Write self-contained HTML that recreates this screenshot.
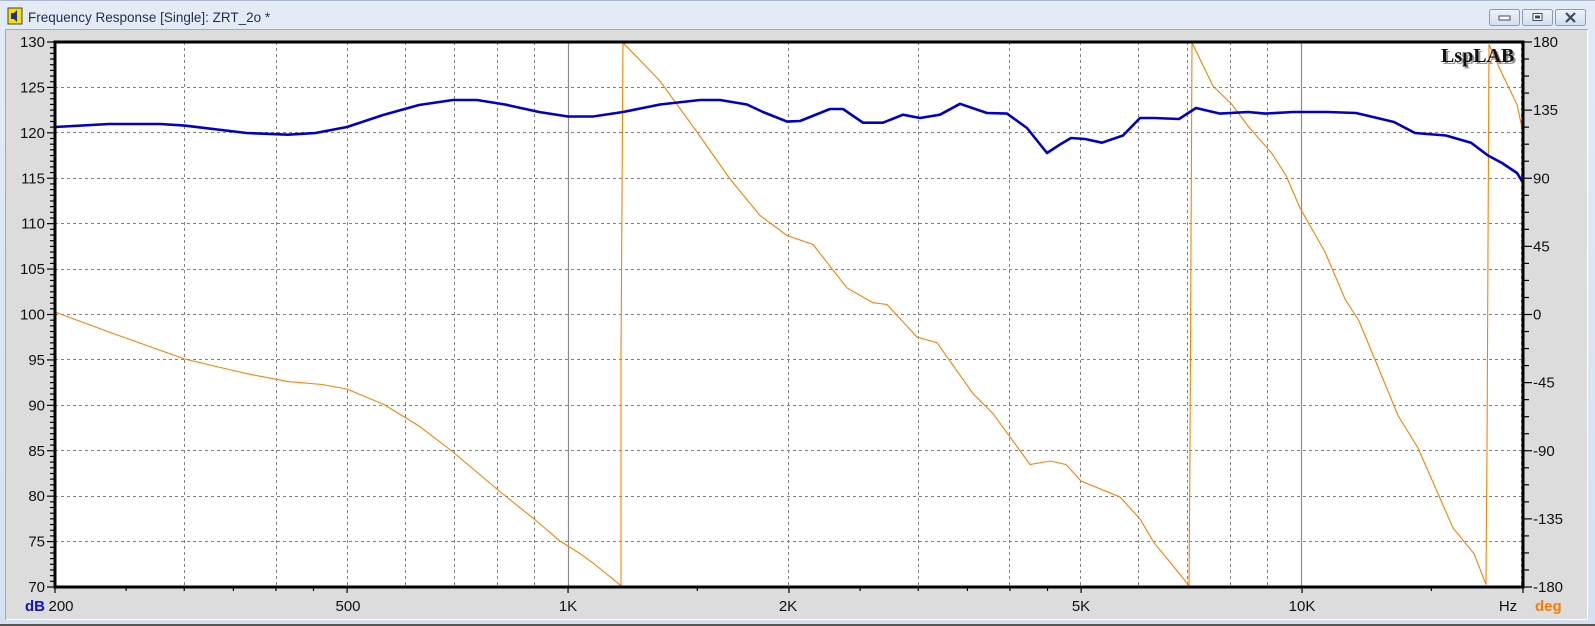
<!DOCTYPE html>
<html><head><meta charset="utf-8"><style>
html,body{margin:0;padding:0;width:1595px;height:626px;overflow:hidden;background:#d9e4f1;font-family:"Liberation Sans",sans-serif}
</style></head><body>
<svg width="1595" height="626" viewBox="0 0 1595 626" xmlns="http://www.w3.org/2000/svg" style="position:absolute;left:0;top:0">
<defs>
<linearGradient id="tb" x1="0" y1="0" x2="0" y2="1"><stop offset="0" stop-color="#e3ebf6"/><stop offset="1" stop-color="#d5e1f0"/></linearGradient>
<linearGradient id="bt" x1="0" y1="0" x2="0" y2="1"><stop offset="0" stop-color="#eef3fa"/><stop offset="1" stop-color="#d3deec"/></linearGradient>
</defs>
<rect x="0" y="0" width="1595" height="626" fill="url(#tb)"/>
<rect x="0" y="0" width="1595" height="1" fill="#a9b8cc"/>
<rect x="0" y="624" width="1595" height="2" fill="#555"/>
<rect x="8" y="8" width="14" height="16" fill="#f6e200" stroke="#444" stroke-width="1"/>
<path d="M11 13h3l3-3v12l-3-3h-3z" fill="#2a2aa0"/>
<text x="28" y="22" font-size="13.5" fill="#1e2f4a">Frequency Response [Single]: ZRT_2o *</text>
<g stroke="#8a9bb3" fill="url(#bt)">
<rect x="1489.5" y="9.5" width="30" height="16" rx="2"/>
<rect x="1522.5" y="9.5" width="30" height="16" rx="2"/>
<rect x="1555.5" y="9.5" width="30" height="16" rx="2"/>
</g>
<rect x="1499" y="16" width="11" height="4" fill="#fff" stroke="#3e4a5c"/>
<rect x="1533" y="13.5" width="9" height="7" fill="#fff" stroke="#3e4a5c"/>
<rect x="1535" y="15.5" width="5" height="3" fill="#3e4a5c"/>
<path d="M1566 13l9 9M1575 13l-9 9" stroke="#3e4a5c" stroke-width="2.2"/>
<rect x="5" y="29" width="1583" height="591" fill="#fff"/>
<rect x="6" y="30" width="1581" height="589" fill="#dcdcdc"/>
<rect x="5" y="29" width="1583" height="1" fill="#aaa"/>
<rect x="5" y="29" width="1" height="591" fill="#aaa"/>
<rect x="55" y="42" width="1468" height="545" fill="#fff"/>
<g stroke="#808080" stroke-width="1" stroke-dasharray="3,3" fill="none">
<path d="M55 87.5H1523M55 132.5H1523M55 178.5H1523M55 223.5H1523M55 269.5H1523M55 314.5H1523M55 359.5H1523M55 405.5H1523M55 450.5H1523M55 496.5H1523M55 541.5H1523"/>
<path d="M184.5 42V587M276.5 42V587M347.5 42V587M405.5 42V587M454.5 42V587M497.5 42V587M534.5 42V587M788.5 42V587M918.5 42V587M1009.5 42V587M1080.5 42V587M1138.5 42V587M1187.5 42V587M1230.5 42V587M1267.5 42V587M1521.5 42V587"/>
</g>
<path d="M568.5 42V587M1301.5 42V587" stroke="#8c8c8c" stroke-width="1.2"/>
<polyline fill="none" stroke="#ff8000" stroke-width="1.1" points="55,312 109,332 184.6,359 246.6,373.6 288,381.6 322,384.5 347,389 384,404.5 419,426 453,452 498,490 539,523 560,541 580,553.6 593,563 621,585.6 621,355 623,42.7 660,81 697,132 730,179 760,215.5 787,235.5 813,244.5 847,288 873,302.7 887,304.5 917,337 937,342.7 973,393.6 993,413.6 1030,464.5 1050,461 1066,464.5 1081,481 1120,497 1140,519 1154,542.7 1172,564.5 1189,585.6 1190,450 1192,42.7 1213,86 1232,104.5 1248,126 1272,153.6 1286,175.5 1300,208 1325,252 1345,299 1359,321 1377,364.5 1398,415.5 1418,448 1453,528 1474,553.6 1486,584.5 1487,450 1489,44.5 1502,73.6 1517,104.5 1522,128"/>
<polyline fill="none" stroke="#0000c8" stroke-width="2.6" stroke-linejoin="round" points="55,127 109,124 160.5,124 184.6,125.6 246.6,133 288,134.7 315.5,133 347,127 384,114.7 419,105 453,100 477,100 505,104.5 539,112 568,116.5 593,116.5 623,112 660,104.5 700,100 720,100 747,104.5 763,112 787,121.6 800,121 830,109 843,109 863,122.7 883,122.7 903,114.7 920,118 940,114.7 960,103.8 987,113 1007,113.6 1027,128 1047,153 1060,144.5 1071,138 1085,139 1102,142.7 1123,135.5 1140,118 1154,118 1179,119 1196,108 1220,113.6 1248,112 1265,113.6 1293,112 1328,112 1356,113 1373,117 1394,122 1415,133 1446,135.5 1471,142.7 1488,155.5 1502,163 1517,173 1523,182.7"/>
<rect x="55" y="42" width="1468" height="545" fill="none" stroke="#000" stroke-width="3"/>
<g stroke="#000" stroke-width="1.2" id="lt"></g>
<text x="1443" y="64" font-family="'Liberation Serif',serif" font-weight="bold" font-size="20" fill="#999">LspLAB</text>
<text x="1441" y="62" font-family="'Liberation Serif',serif" font-weight="bold" font-size="20" fill="#111">LspLAB</text>
<g font-size="15" fill="#111" text-anchor="end" id="ll"></g>
<g font-size="15" fill="#111" id="rl"></g>
<g font-size="15" fill="#111" text-anchor="middle">
<text x="61" y="611">200</text><text x="348" y="611">500</text><text x="568" y="611">1K</text>
<text x="788" y="611">2K</text><text x="1081" y="611">5K</text><text x="1302" y="611">10K</text>
<text x="1508" y="611">Hz</text>
</g>
<text x="25" y="611" font-size="15" font-weight="bold" fill="#1010c8">dB</text>
<text x="1535" y="611" font-size="15" font-weight="bold" fill="#ff7a00">deg</text>
</svg>
<script>
var ns="http://www.w3.org/2000/svg";
var lt=document.getElementById("lt"),ll=document.getElementById("ll"),rl=document.getElementById("rl");
function ln(x1,y1,x2,y2){var l=document.createElementNS(ns,"line");l.setAttribute("x1",x1);l.setAttribute("y1",y1);l.setAttribute("x2",x2);l.setAttribute("y2",y2);lt.appendChild(l);}
function tx(g,x,y,s){var t=document.createElementNS(ns,"text");t.setAttribute("x",x);t.setAttribute("y",y);t.textContent=s;g.appendChild(t);}
for(var i=0;i<=96;i++){var y=42+i*545/96;var maj=i%8==0;ln(maj?47:50,y,55,y);}
for(var k=0;k<=12;k++){tx(ll,45,42+k*545/12+5,String(130-5*k));}
for(var i=0;i<=32;i++){var y=42+i*545/32;var maj=i%4==0;ln(1523,y,maj?1532:1529,y);}
var ph=["180","135","90","45","0","-45","-90","-135","-180"];
for(var k=0;k<9;k++){tx(rl,1533,42+k*545/8+5,ph[k]);}
var fr=[200,250,300,350,400,450,500,1000,1500,2000,2500,3000,3500,4000,4500,5000,10000,15000,20000];
var big={200:1,500:1,1000:1,2000:1,5000:1,10000:1,20000:1};
fr.forEach(function(f){var x=55+734*Math.log10(f/200);ln(x,587,x,big[f]?593:591);});
</script>
</body></html>
